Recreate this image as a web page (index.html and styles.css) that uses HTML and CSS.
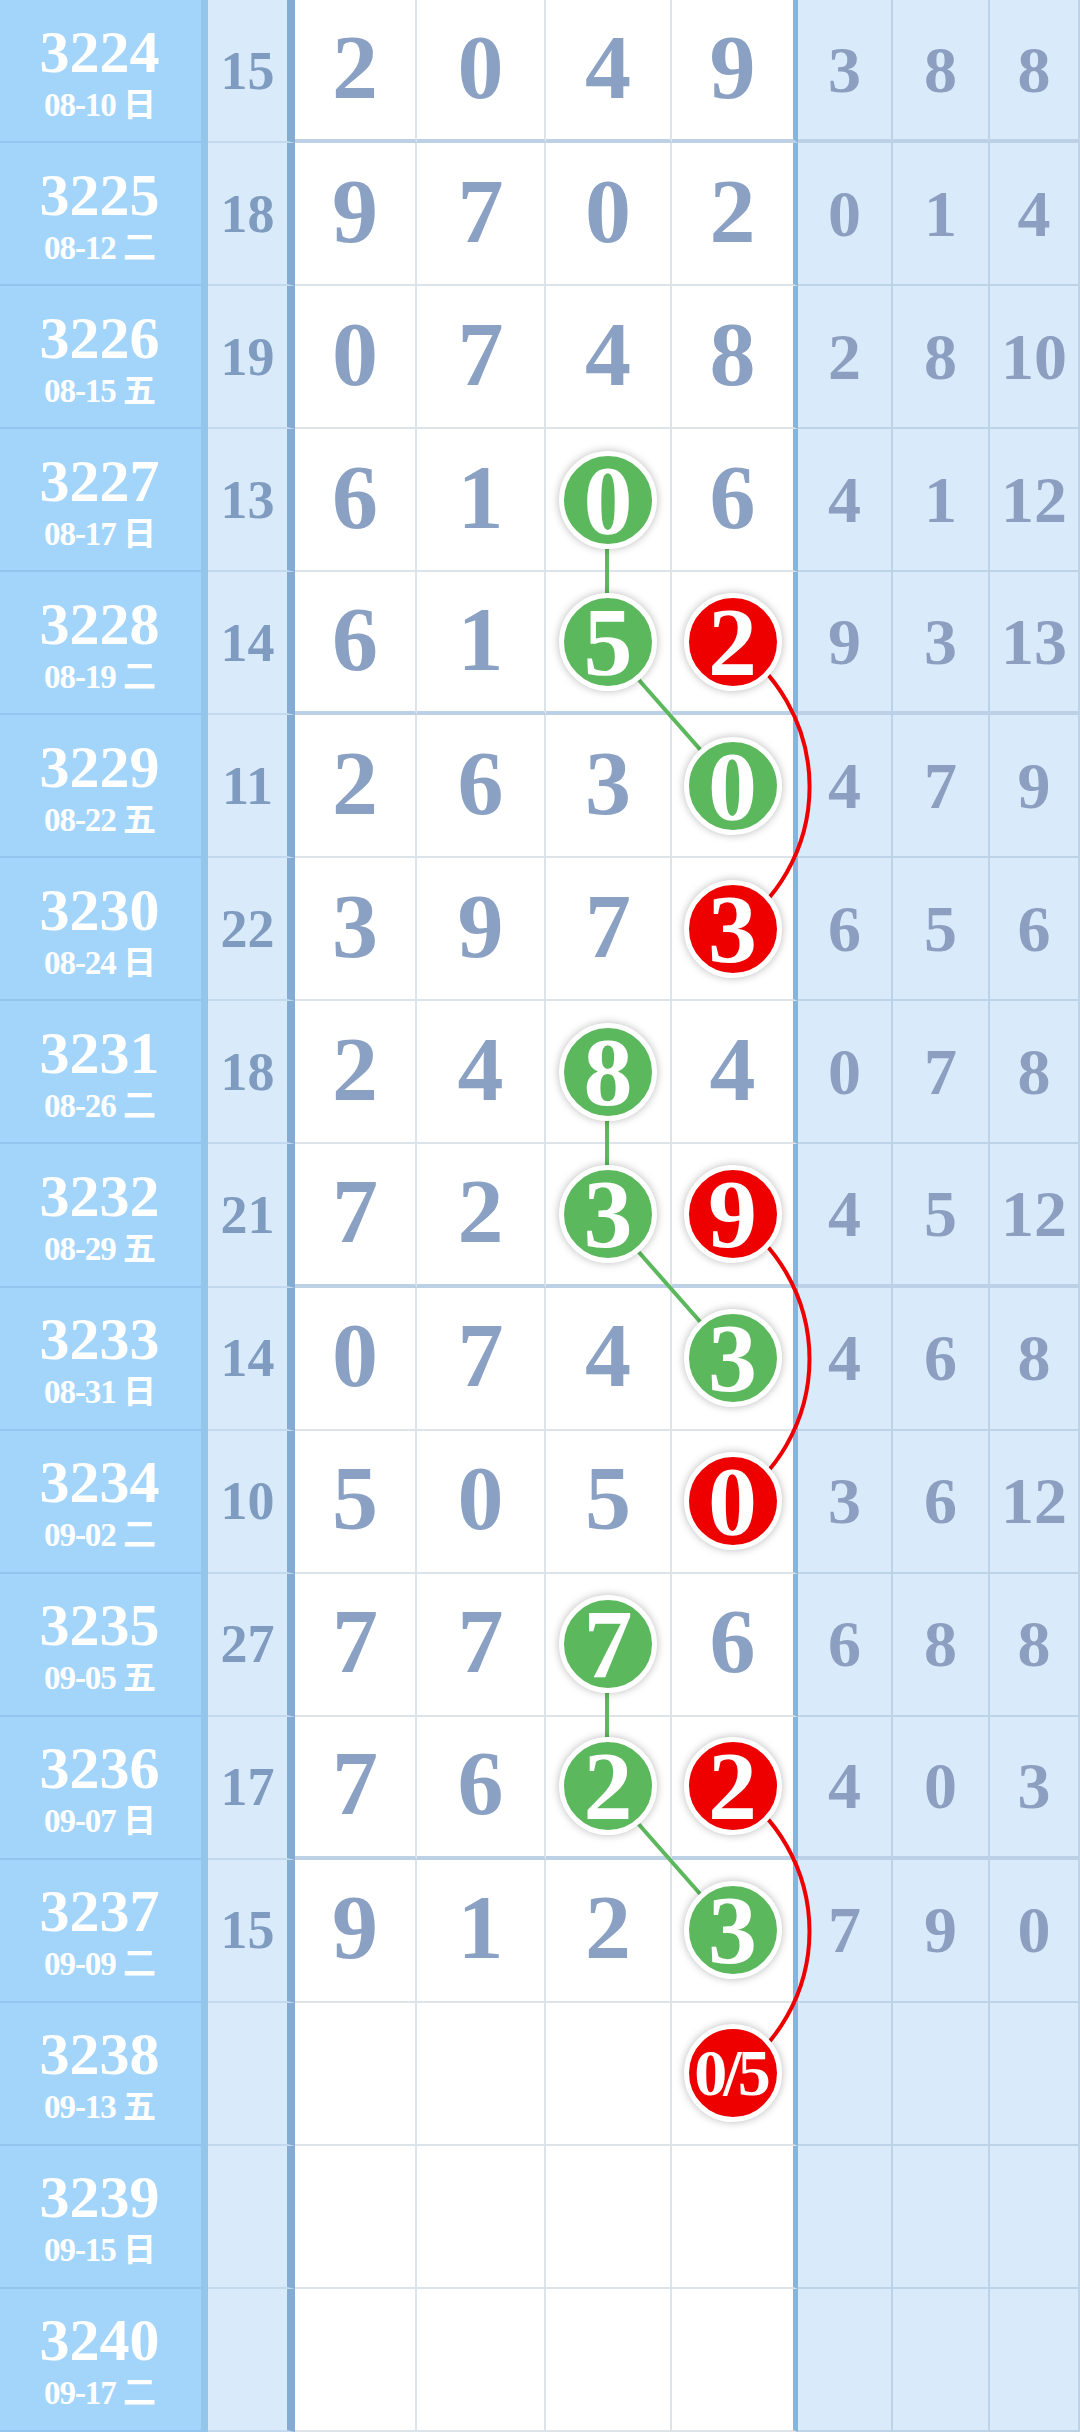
FILE: index.html
```html
<!DOCTYPE html>
<html lang="zh-CN">
<head>
    <meta charset="UTF-8">
    <meta name="viewport" content="width=device-width, initial-scale=1.0">
    <title>走势图</title>
    <link rel="stylesheet" href="styles.css">
</head>
<body>
    <div class="chart">
        <div class="row sep">
            <div class="issue"><b>3224</b><span>08-10 日</span></div>
            <div class="sum">15</div>
            <div class="num">2</div><div class="num">0</div><div class="num">4</div><div class="num last">9</div>
            <div class="side">3</div><div class="side">8</div><div class="side">8</div>
        </div>
        <div class="row">
            <div class="issue"><b>3225</b><span>08-12 二</span></div>
            <div class="sum">18</div>
            <div class="num">9</div><div class="num">7</div><div class="num">0</div><div class="num last">2</div>
            <div class="side">0</div><div class="side">1</div><div class="side">4</div>
        </div>
        <div class="row">
            <div class="issue"><b>3226</b><span>08-15 五</span></div>
            <div class="sum">19</div>
            <div class="num">0</div><div class="num">7</div><div class="num">4</div><div class="num last">8</div>
            <div class="side">2</div><div class="side">8</div><div class="side">10</div>
        </div>
        <div class="row">
            <div class="issue"><b>3227</b><span>08-17 日</span></div>
            <div class="sum">13</div>
            <div class="num">6</div><div class="num">1</div><div class="num"><span class="ball green">0</span></div><div class="num last">6</div>
            <div class="side">4</div><div class="side">1</div><div class="side">12</div>
        </div>
        <div class="row sep">
            <div class="issue"><b>3228</b><span>08-19 二</span></div>
            <div class="sum">14</div>
            <div class="num">6</div><div class="num">1</div><div class="num"><span class="ball green">5</span></div><div class="num last"><span class="ball red">2</span></div>
            <div class="side">9</div><div class="side">3</div><div class="side">13</div>
        </div>
        <div class="row">
            <div class="issue"><b>3229</b><span>08-22 五</span></div>
            <div class="sum">11</div>
            <div class="num">2</div><div class="num">6</div><div class="num">3</div><div class="num last"><span class="ball green">0</span></div>
            <div class="side">4</div><div class="side">7</div><div class="side">9</div>
        </div>
        <div class="row">
            <div class="issue"><b>3230</b><span>08-24 日</span></div>
            <div class="sum">22</div>
            <div class="num">3</div><div class="num">9</div><div class="num">7</div><div class="num last"><span class="ball red">3</span></div>
            <div class="side">6</div><div class="side">5</div><div class="side">6</div>
        </div>
        <div class="row">
            <div class="issue"><b>3231</b><span>08-26 二</span></div>
            <div class="sum">18</div>
            <div class="num">2</div><div class="num">4</div><div class="num"><span class="ball green">8</span></div><div class="num last">4</div>
            <div class="side">0</div><div class="side">7</div><div class="side">8</div>
        </div>
        <div class="row sep">
            <div class="issue"><b>3232</b><span>08-29 五</span></div>
            <div class="sum">21</div>
            <div class="num">7</div><div class="num">2</div><div class="num"><span class="ball green">3</span></div><div class="num last"><span class="ball red">9</span></div>
            <div class="side">4</div><div class="side">5</div><div class="side">12</div>
        </div>
        <div class="row">
            <div class="issue"><b>3233</b><span>08-31 日</span></div>
            <div class="sum">14</div>
            <div class="num">0</div><div class="num">7</div><div class="num">4</div><div class="num last"><span class="ball green">3</span></div>
            <div class="side">4</div><div class="side">6</div><div class="side">8</div>
        </div>
        <div class="row">
            <div class="issue"><b>3234</b><span>09-02 二</span></div>
            <div class="sum">10</div>
            <div class="num">5</div><div class="num">0</div><div class="num">5</div><div class="num last"><span class="ball red">0</span></div>
            <div class="side">3</div><div class="side">6</div><div class="side">12</div>
        </div>
        <div class="row">
            <div class="issue"><b>3235</b><span>09-05 五</span></div>
            <div class="sum">27</div>
            <div class="num">7</div><div class="num">7</div><div class="num"><span class="ball green">7</span></div><div class="num last">6</div>
            <div class="side">6</div><div class="side">8</div><div class="side">8</div>
        </div>
        <div class="row sep">
            <div class="issue"><b>3236</b><span>09-07 日</span></div>
            <div class="sum">17</div>
            <div class="num">7</div><div class="num">6</div><div class="num"><span class="ball green">2</span></div><div class="num last"><span class="ball red">2</span></div>
            <div class="side">4</div><div class="side">0</div><div class="side">3</div>
        </div>
        <div class="row">
            <div class="issue"><b>3237</b><span>09-09 二</span></div>
            <div class="sum">15</div>
            <div class="num">9</div><div class="num">1</div><div class="num">2</div><div class="num last"><span class="ball green">3</span></div>
            <div class="side">7</div><div class="side">9</div><div class="side">0</div>
        </div>
        <div class="row">
            <div class="issue"><b>3238</b><span>09-13 五</span></div>
            <div class="sum"></div>
            <div class="num"></div><div class="num"></div><div class="num"></div><div class="num last"><span class="ball red small">0/5</span></div>
            <div class="side"></div><div class="side"></div><div class="side"></div>
        </div>
        <div class="row">
            <div class="issue"><b>3239</b><span>09-15 日</span></div>
            <div class="sum"></div>
            <div class="num"></div><div class="num"></div><div class="num"></div><div class="num last"></div>
            <div class="side"></div><div class="side"></div><div class="side"></div>
        </div>
        <div class="row">
            <div class="issue"><b>3240</b><span>09-17 二</span></div>
            <div class="sum"></div>
            <div class="num"></div><div class="num"></div><div class="num"></div><div class="num last"></div>
            <div class="side"></div><div class="side"></div><div class="side"></div>
        </div>

        <!-- connecting lines, drawn under the balls -->
        <svg class="links" width="1080" height="2432" viewBox="0 0 1080 2432">
            <g class="green-line">
                <line x1="607" y1="500.7" x2="607" y2="643.7"/>
                <line x1="607" y1="643.7" x2="733" y2="786.8"/>
                <line x1="607" y1="1072.9" x2="607" y2="1216"/>
                <line x1="607" y1="1216" x2="733" y2="1359"/>
                <line x1="607" y1="1645.2" x2="607" y2="1788.2"/>
                <line x1="607" y1="1788.2" x2="733" y2="1931.3"/>
            </g>
            <g class="red-line">
                <path d="M733 643.7 A172 172 0 0 1 733 929.9"/>
                <path d="M733 1216 A172 172 0 0 1 733 1502.1"/>
                <path d="M733 1788.2 A172 172 0 0 1 733 2074.3"/>
            </g>
        </svg>
    </div>
</body>
</html>
```

FILE: styles.css
```css
* {
    box-sizing: border-box;
}

body {
    margin: 0;
    background-color: #ffffff;
    font-family: "Liberation Serif", "Noto Sans CJK SC", serif;
}

.chart {
    position: relative;
    width: 1080px;
    height: 2432px;
    display: grid;
    grid-template-rows: repeat(17, 1fr);
    overflow: hidden;
}

.row {
    display: grid;
    grid-template-columns: 208px 87px 122px 129px 126px 126px 95px 97px 90px;
}

.row > div {
    display: flex;
    align-items: center;
    justify-content: center;
    font-weight: bold;
    border-bottom: 2px solid #dce3e9;
}

.issue {
    flex-direction: column;
    gap: 6px;
    background-color: #a3d5fb;
    color: #ffffff;
    border-right: 7px solid #94c5eb;
    padding-right: 2px;
}

.row > .issue {
    border-bottom-color: #92c6ee;
}

.issue b {
    font-size: 60px;
    line-height: 58px;
    margin-top: 4px;
}

.issue span {
    font-size: 33px;
    line-height: 36px;
    letter-spacing: -1px;
    white-space: nowrap;
}

.sum {
    background-color: #d9ebfa;
    color: #7f9bbf;
    font-size: 54px;
    border-right: 8px solid #84acd2;
}

.row > .sum {
    border-bottom-color: #c3daee;
}

.num {
    color: #8ba1c4;
    font-size: 92px;
    border-right: 2px solid #dce3e9;
    padding-bottom: 6px;
}

.num.last {
    border-right: 5px solid #86b5dc;
}

.side {
    background-color: #d9ebfa;
    color: #8c9fc0;
    font-size: 66px;
    border-right: 2px solid #bcd3e8;
}

.row > .side {
    border-bottom-color: #bcd3e8;
}

.row.sep > .num,
.row.sep > .side {
    border-bottom: 4px solid #bcd1e6;
}

.links {
    position: absolute;
    top: 0;
    left: 0;
    z-index: 1;
    pointer-events: none;
}

.green-line line {
    stroke: #5cb85c;
    stroke-width: 4;
}

.red-line path {
    fill: none;
    stroke: #ee0000;
    stroke-width: 4;
}

.ball {
    position: relative;
    z-index: 2;
    width: 98px;
    height: 98px;
    border-radius: 50%;
    border: 5px solid #ffffff;
    box-shadow: 0 0 8px rgba(0, 0, 0, 0.28);
    display: flex;
    align-items: center;
    justify-content: center;
    color: #ffffff;
    font-size: 98px;
    line-height: 1;
    margin-top: 6px;
}

.ball.green {
    background-color: #5cb85c;
}

.ball.red {
    background-color: #ee0000;
}

.ball.small {
    font-size: 66px;
    letter-spacing: -4px;
    padding-right: 4px;
}
```
